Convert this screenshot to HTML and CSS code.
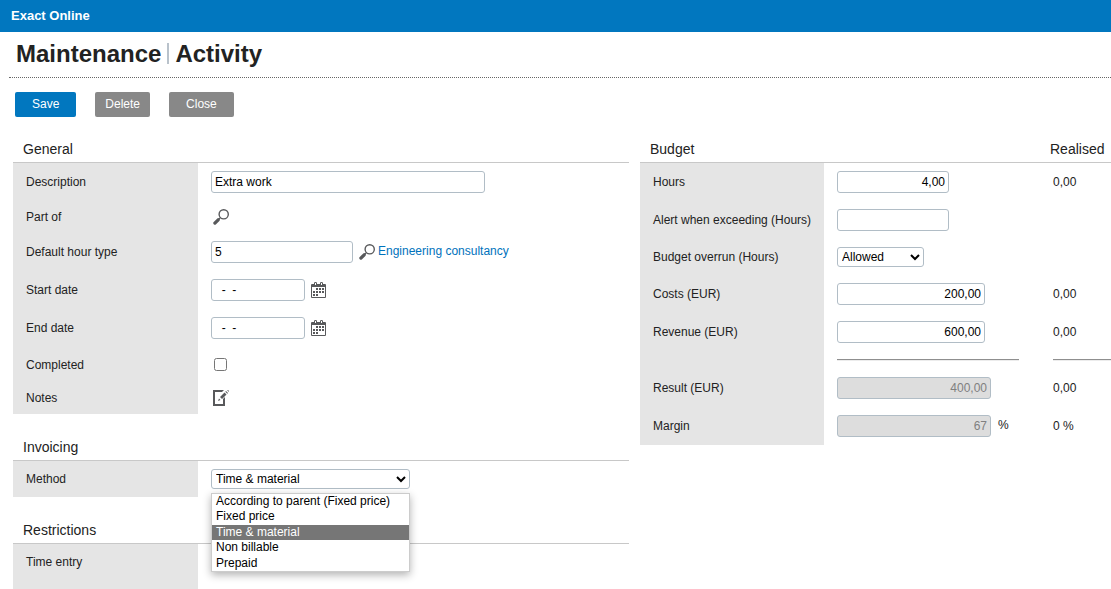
FILE: index.html
```html
<!DOCTYPE html>
<html lang="en">
<head>
<meta charset="utf-8">
<title>Maintenance | Activity</title>
<link rel="stylesheet" href="styles.css">
</head>
<body>
<svg class="sprite" aria-hidden="true">
  <symbol id="search" viewBox="0 0 16 16">
    <circle cx="10.700" cy="5.300" r="4.600" fill="none" stroke="#58595b" stroke-width="1.400"/>
    <path d="M7.400 8.600 5.600 10.400" stroke="#58595b" stroke-width="1.300"/>
    <path d="M5.200 10.800 1.900 14.100" stroke="#58595b" stroke-width="3.300" stroke-linecap="round"/>
  </symbol>
  <symbol id="calendar" viewBox="0 0 15 16">
    <path fill="#58595b" fill-rule="evenodd" d="M1 2H3V1q0-1 1.500-1T6 1V2H9V1q0-1 1.500-1T12 1V2h2q1 0 1 1V15q0 1-1 1H1q-1 0-1-1V3Q0 2 1 2ZM4 1V3H5V1ZM10 1V3h1V1ZM1 5V15H14V5Z"/>
    <path fill="#58595b" d="M5 6h2v2H5zM8 6h2v2H8zM11 6h2v2h-2zM2 9h2v2H2zM5 9h2v2H5zM8 9h2v2H8zM11 9h2v2h-2zM2 12h2v2H2zM5 12h2v2H5z"/>
  </symbol>
  <symbol id="note" viewBox="0 0 17 16">
    <path fill="#58595b" d="M0 0H11L9 2H2V14H10V9L12 7V16H0Z"/>
    <path fill="#58595b" d="M7 7 11.500 2.500 13.500 4.500 9 9ZM5 11 6 8.500 7.500 10ZM12.300 1.700 13 1 15 3 14.300 3.700ZM14 0H15L16 1V2Z"/>
  </symbol>
</svg>

<header class="topbar">Exact Online</header>
<h1 class="title"><span>Maintenance</span><span class="title-bar"></span><span>Activity</span></h1>

<div class="toolbar">
  <button type="button" class="btn btn-primary">Save</button>
  <button type="button" class="btn btn-narrow">Delete</button>
  <button type="button" class="btn">Close</button>
</div>

<main class="columns">
  <div class="column">
    <section>
      <h2 class="heading heading-first">General</h2>
      <div class="row">
        <label class="label" for="description">Description</label>
        <div class="value"><input class="field wide" id="description" value="Extra work"></div>
      </div>
      <div class="row row-short">
        <span class="label">Part of</span>
        <div class="value"><button type="button" class="icon-btn" aria-label="Search parent"><svg class="icon"><use href="#search"/></svg></button></div>
      </div>
      <div class="row">
        <label class="label" for="hourtype">Default hour type</label>
        <div class="value">
          <input class="field medium" id="hourtype" value="5">
          <button type="button" class="icon-btn" aria-label="Search hour type"><svg class="icon"><use href="#search"/></svg></button>
          <a class="link" href="#">Engineering consultancy</a>
        </div>
      </div>
      <div class="row">
        <label class="label" for="start">Start date</label>
        <div class="value">
          <input class="field date" id="start" value="  -  -">
          <button type="button" class="icon-btn" aria-label="Pick start date"><svg class="icon icon-calendar"><use href="#calendar"/></svg></button>
        </div>
      </div>
      <div class="row">
        <label class="label" for="end">End date</label>
        <div class="value">
          <input class="field date" id="end" value="  -  -">
          <button type="button" class="icon-btn" aria-label="Pick end date"><svg class="icon icon-calendar"><use href="#calendar"/></svg></button>
        </div>
      </div>
      <div class="row row-check">
        <label class="label" for="completed">Completed</label>
        <div class="value"><input type="checkbox" class="check" id="completed"></div>
      </div>
      <div class="row row-short">
        <span class="label">Notes</span>
        <div class="value"><button type="button" class="icon-btn" aria-label="Edit notes"><svg class="icon icon-note"><use href="#note"/></svg></button></div>
      </div>
    </section>

    <section>
      <h2 class="heading">Invoicing</h2>
      <div class="row row-select">
        <label class="label" for="method">Method</label>
        <div class="value">
          <div class="dropdown">
            <select class="select" id="method"><option>Time &amp; material</option></select>
            <ul class="menu" role="listbox" aria-label="Method">
              <li role="option">According to parent (Fixed price)</li>
              <li role="option">Fixed price</li>
              <li role="option" aria-selected="true" class="selected">Time &amp; material</li>
              <li role="option">Non billable</li>
              <li role="option">Prepaid</li>
            </ul>
          </div>
        </div>
      </div>
    </section>

    <section>
      <h2 class="heading">Restrictions</h2>
      <div class="row row-last">
        <span class="label">Time entry</span>
        <div class="value"></div>
      </div>
    </section>
  </div>

  <section class="column budget">
    <div class="heading heading-first heading-split"><h2>Budget</h2><h2>Realised</h2></div>
    <div class="row">
      <label class="label" for="hours">Hours</label>
      <div class="value"><input class="field amount small" id="hours" value="4,00"></div>
      <div class="real">0,00</div>
    </div>
    <div class="row">
      <label class="label" for="alert">Alert when exceeding (Hours)</label>
      <div class="value"><input class="field amount small" id="alert"></div>
      <div class="real"></div>
    </div>
    <div class="row row-select">
      <label class="label" for="overrun">Budget overrun (Hours)</label>
      <div class="value"><select class="select select-small" id="overrun"><option>Allowed</option></select></div>
      <div class="real"></div>
    </div>
    <div class="row">
      <label class="label" for="costs">Costs (EUR)</label>
      <div class="value"><input class="field amount" id="costs" value="200,00"></div>
      <div class="real">0,00</div>
    </div>
    <div class="row">
      <label class="label" for="revenue">Revenue (EUR)</label>
      <div class="value"><input class="field amount" id="revenue" value="600,00"></div>
      <div class="real">0,00</div>
    </div>
    <div class="row row-rule">
      <span class="label"></span>
      <div class="value"><hr class="rule"></div>
      <div class="real"><hr class="rule"></div>
    </div>
    <div class="row">
      <label class="label" for="result">Result (EUR)</label>
      <div class="value"><input class="field amount total" id="result" value="400,00" disabled></div>
      <div class="real">0,00</div>
    </div>
    <div class="row">
      <label class="label" for="margin">Margin</label>
      <div class="value"><input class="field amount total" id="margin" value="67" disabled><span class="unit">%</span></div>
      <div class="real">0 %</div>
    </div>
  </section>
</main>
</body>
</html>
```

FILE: styles.css
```css
* {
  box-sizing: border-box;
}

body {
  margin: 0;
  background: #fff;
  color: #222;
  font: 12px/16px "Liberation Sans", Arial, sans-serif;
}

input,
select,
button {
  margin: 0;
  font: inherit;
}

.sprite {
  display: none;
}

.topbar {
  height: 32px;
  padding-left: 11px;
  background: #0177bf;
  color: #fff;
  font-size: 13px;
  font-weight: bold;
  line-height: 32px;
}

.title {
  display: flex;
  align-items: center;
  gap: 6px;
  height: 46px;
  margin: 0 0 0 9px;
  padding: 0 0 2px 7px;
  border-bottom: 1px dotted #666;
  font-size: 24px;
  line-height: 28px;
}

.title-bar {
  width: 2px;
  height: 21px;
  background: #b9c2cb;
}

.toolbar {
  display: flex;
  gap: 19px;
  padding: 14px 15px 0;
}

.btn {
  height: 25px;
  padding: 0 17px 2px;
  border: 0;
  border-radius: 2px;
  background: #888;
  color: #fff;
}

.btn-primary {
  background: #0177bf;
}

.btn-narrow {
  padding: 0 10px 2px;
}

.columns {
  display: grid;
  grid-template-columns: 616fr 471fr;
  align-items: start;
  gap: 11px;
  padding: 22px 0 0 13px;
}

.heading {
  height: 47px;
  margin: 0;
  padding: 24px 0 0 10px;
  border-bottom: 1px solid #c8c8c8;
  font-size: 14px;
  font-weight: normal;
  line-height: 18px;
}

.heading-first {
  height: 24px;
  padding-top: 1px;
}

.heading-split {
  display: grid;
  grid-template-columns: 1fr 61px;
}

.heading-split h2 {
  margin: 0;
  font: inherit;
}

.row {
  display: grid;
  grid-template-columns: 185px 1fr;
  min-height: 38px;
}

.row-short {
  min-height: 32px;
}

.row-check {
  min-height: 35px;
}

.row-select {
  min-height: 36px;
}

.row-last {
  min-height: 45px;
}

.row-rule {
  min-height: 18px;
}

.label {
  display: flex;
  align-items: center;
  padding-left: 13px;
  background: #e5e5e5;
}

.row-last .label {
  align-items: flex-start;
  padding-top: 10px;
}

.value,
.real {
  display: flex;
  align-items: center;
}

.value {
  padding-left: 13px;
}

.budget .row {
  grid-template-columns: 184px 1fr 58px;
}

.budget .value {
  padding-right: 34px;
}

.field {
  width: 148px;
  height: 22px;
  padding: 0 3px;
  border: 1px solid #b1bdc6;
  border-radius: 3px;
  background: #fff;
  color: #000;
}

.field:disabled {
  background: #ddd;
  color: #808080;
}

.wide {
  width: 274px;
}

.medium {
  width: 142px;
}

.date {
  width: 94px;
}

.amount {
  text-align: right;
}

.small {
  width: 112px;
}

.total {
  width: 154px;
}

.unit {
  padding: 0 0 2px 7px;
}

.icon-btn {
  display: flex;
  padding: 0;
  border: 0;
  background: none;
}

.field + .icon-btn {
  margin-left: 6px;
}

.icon-btn:first-child {
  margin-left: 2px;
}

.icon {
  width: 16px;
  height: 16px;
}

.icon-calendar {
  width: 15px;
}

.icon-note {
  width: 17px;
}

.link {
  padding: 0 0 2px 3px;
  color: #0072bc;
  text-decoration: none;
}

.check {
  width: 13px;
  height: 13px;
  margin-left: 3px;
}

.dropdown {
  position: relative;
}

.select {
  display: block;
  width: 199px;
  height: 20px;
  border: 1px solid #b1bdc6;
  border-radius: 3px;
  background: #fff;
  color: #000;
}

.select-small {
  width: 87px;
}

.menu {
  position: absolute;
  top: 24px;
  left: 0;
  display: flex;
  flex-direction: column;
  width: 199px;
  height: 79px;
  margin: 0;
  padding: 0;
  border: 1px solid #ccc;
  background: #fff;
  box-shadow: 0 3px 8px rgba(0, 0, 0, 0.3);
  color: #000;
  line-height: 15px;
  list-style: none;
}

.menu li {
  flex: 1;
  padding-left: 4px;
}

.menu .selected {
  background: #767676;
  color: #fff;
}

.rule {
  width: 100%;
  margin: 0;
  border: 0;
  border-top: 1px solid #8f8f8f;
  border-bottom: 1px solid #ececec;
}
```
